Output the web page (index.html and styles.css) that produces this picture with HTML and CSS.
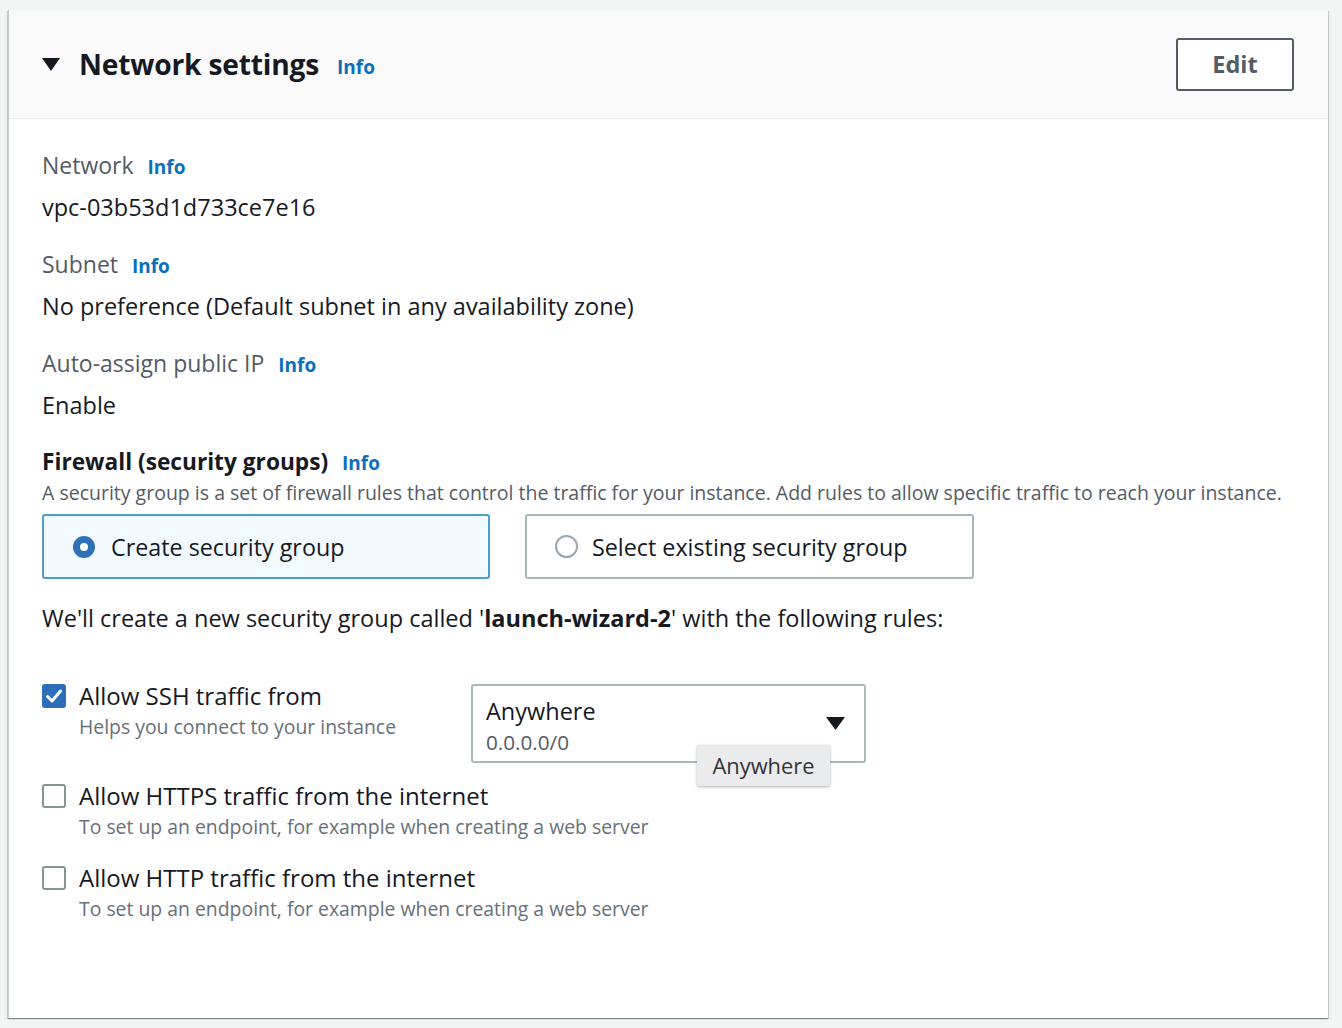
FILE: index.html
```html
<!DOCTYPE html>
<html>
<head>
<meta charset="utf-8">
<link rel="stylesheet" href="styles.css">
</head>
<body>
<div class="card">
  <div class="card-header">
    <div class="title-group">
      <svg class="caret" width="18" height="13" viewBox="0 0 18 13"><path d="M0 0 H18 L9 13 Z" fill="#16191f"/></svg>
      <h2 class="title">Network settings</h2>
      <a class="info info-title">Info</a>
    </div>
    <button class="edit-btn">Edit</button>
  </div>
  <div class="card-body">
    <div class="field">
      <div class="label">Network <a class="info">Info</a></div>
      <div class="value">vpc-03b53d1d733ce7e16</div>
    </div>
    <div class="field">
      <div class="label">Subnet <a class="info">Info</a></div>
      <div class="value">No preference (Default subnet in any availability zone)</div>
    </div>
    <div class="field">
      <div class="label">Auto-assign public IP <a class="info">Info</a></div>
      <div class="value">Enable</div>
    </div>
    <div class="firewall">
      <div class="fw-title">Firewall (security groups) <a class="info">Info</a></div>
      <div class="fw-desc">A security group is a set of firewall rules that control the traffic for your instance. Add rules to allow specific traffic to reach your instance.</div>
      <div class="tiles">
        <div class="tile tile-selected">
          <span class="radio radio-on"></span>
          <span class="tile-label">Create security group</span>
        </div>
        <div class="tile">
          <span class="radio"></span>
          <span class="tile-label">Select existing security group</span>
        </div>
      </div>
    </div>
    <div class="sentence">We'll create a new security group called '<b>launch-wizard-2</b>' with the following rules:</div>
    <div class="rules">
      <div class="rule rule-ssh">
        <div class="check-group">
          <span class="checkbox checkbox-on">
            <svg width="24" height="24" viewBox="0 0 24 24"><path d="M5.5 12.5 L10 17 L18.5 7" fill="none" stroke="#fff" stroke-width="3" stroke-linecap="round" stroke-linejoin="round"/></svg>
          </span>
          <div class="check-text">
            <div class="check-label">Allow SSH traffic from</div>
            <div class="check-desc">Helps you connect to your instance</div>
          </div>
        </div>
        <div class="select">
          <div class="select-text">
            <div class="select-main">Anywhere</div>
            <div class="select-sub">0.0.0.0/0</div>
          </div>
          <svg class="select-caret" width="19" height="13" viewBox="0 0 19 13"><path d="M0 0 H19 L9.5 13 Z" fill="#16191f"/></svg>
          <div class="tooltip">Anywhere</div>
        </div>
      </div>
      <div class="rule">
        <div class="check-group">
          <span class="checkbox"></span>
          <div class="check-text">
            <div class="check-label">Allow HTTPS traffic from the internet</div>
            <div class="check-desc">To set up an endpoint, for example when creating a web server</div>
          </div>
        </div>
      </div>
      <div class="rule">
        <div class="check-group">
          <span class="checkbox"></span>
          <div class="check-text">
            <div class="check-label">Allow HTTP traffic from the internet</div>
            <div class="check-desc">To set up an endpoint, for example when creating a web server</div>
          </div>
        </div>
      </div>
    </div>
  </div>
</div>
</body>
</html>
```

FILE: styles.css
```css
* { box-sizing: border-box; }
html, body { margin: 0; padding: 0; }
body {
  background: #f2f3f3;
  font-family: "Open Sans", "Noto Sans", sans-serif;
  color: #16191f;
  padding: 10px 14px 10px 8px;
}
.card {
  background: #fff;
  height: 1008px;
  box-shadow: 0 1px 1px 0 rgba(0,28,36,0.3), 1px 1px 1px 0 rgba(0,28,36,0.15), -1px 1px 1px 0 rgba(0,28,36,0.15);
  border-left: 1px solid #c9cccc;
}
.card-header {
  background: #fafafa;
  height: 109px;
  border-bottom: 1px solid #eaeded;
  display: flex;
  align-items: center;
  justify-content: space-between;
  padding: 0 34px 0 33px;
}
.title-group { display: flex; align-items: center; }
.caret { margin-right: 19px; margin-top: 0; }
.title {
  margin: 0;
  font-size: 28.2px;
  font-weight: 700;
  letter-spacing: -0.2px;
  line-height: 36px;
}
.info {
  color: #0b6fba;
  font-weight: 700;
  font-size: 19px;
  line-height: 20px;
  text-decoration: none;
  margin-left: 8px;
}
.info-title { margin-left: 18px; margin-top: 6px; }
.edit-btn {
  width: 118px;
  height: 53px;
  border: 2px solid #545b64;
  border-radius: 3px;
  background: #fff;
  color: #545b64;
  font-family: inherit;
  font-size: 23.5px;
  font-weight: 700;
  margin-top: 0;
}
.card-body { padding: 31px 33px 0 33px; }
.field { margin-bottom: 27px; }
.label {
  color: #545b64;
  font-size: 23px;
  line-height: 30px;
  height: 30px;
  display: flex;
  align-items: baseline;
  white-space: pre;
}
.value {
  font-size: 23.5px;
  line-height: 30px;
  height: 30px;
  margin-top: 12px;
}
.fw-title {
  font-size: 22.7px;
  font-weight: 700;
  line-height: 30px;
  height: 30px;
  display: flex;
  align-items: baseline;
  white-space: pre;
}
.fw-desc {
  color: #545b64;
  font-size: 19.5px;
  line-height: 26px;
  height: 26px;
  margin-top: 3px;
  white-space: nowrap;
}
.tiles {
  display: flex;
  gap: 35px;
  margin-top: 8px;
}
.tile {
  width: 449px;
  height: 65px;
  border: 2px solid #aab7b8;
  border-radius: 3px;
  display: flex;
  align-items: center;
  padding-left: 28px;
}
.tile-selected {
  width: 448px;
  border-color: #4aa0c8;
  background: #f1faff;
  padding-left: 29px;
}
.radio {
  width: 23px;
  height: 23px;
  border-radius: 50%;
  border: 2px solid #9aa5b1;
  background: #fff;
  margin-right: 14px;
  flex: none;
}
.radio-on {
  width: 22px;
  height: 22px;
  border: 7px solid #2e71b8;
  background: #fff;
  margin-right: 16px;
}
.tile-label { font-size: 23.3px; line-height: 30px; }
.sentence {
  font-size: 23.5px;
  line-height: 30px;
  height: 30px;
  margin-top: 24px;
}
.rules { margin-top: 51px; }
.rule { display: flex; margin-bottom: 26px; }
.rule-ssh { align-items: flex-start; margin-bottom: 21px; height: 79px; }
.check-group { display: flex; align-items: flex-start; width: 429px; }
.checkbox {
  width: 24px;
  height: 24px;
  border: 2px solid #879596;
  border-radius: 3px;
  background: #fff;
  margin-top: 0;
  margin-right: 13px;
  flex: none;
  display: flex;
}
.checkbox-on { background: #2c6fb8; border-color: #2c6fb8; }
.checkbox-on svg { margin: -2px; }
.check-text { white-space: nowrap; }
.check-label { font-size: 24px; line-height: 24px; height: 24px; }
.check-desc { color: #687078; font-size: 19.4px; line-height: 26px; height: 26px; margin-top: 6px; }
.select {
  position: relative;
  width: 395px;
  height: 79px;
  border: 2px solid #aab7b8;
  border-radius: 3px;
  display: flex;
  align-items: flex-start;
  justify-content: space-between;
  padding: 10px 19px 0 13px;
}
.select-main { font-size: 23.5px; line-height: 30px; }
.select-sub { font-size: 20.7px; line-height: 26px; color: #545b64; margin-top: 3px; }
.select-caret { align-self: center; margin-top: -10px; }
.tooltip {
  position: absolute;
  left: 224px;
  top: 59px;
  width: 133px;
  height: 41px;
  background: #eaebed;
  color: #333;
  font-size: 21.9px;
  line-height: 41px;
  text-align: center;
  box-shadow: 0 1px 3px rgba(0,0,0,0.3);
  border-radius: 2px;
}
```
